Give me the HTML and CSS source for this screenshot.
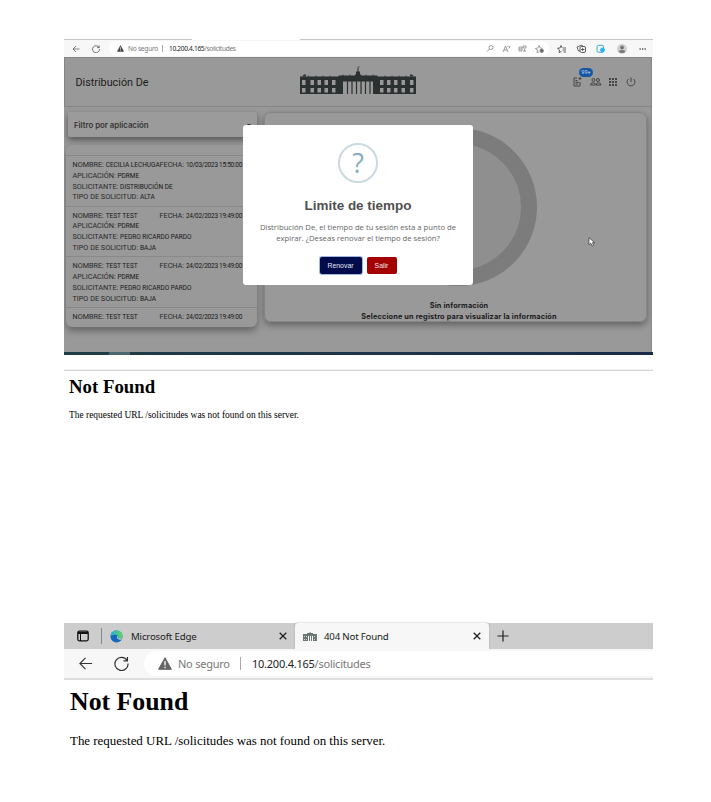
FILE: index.html
```html
<!DOCTYPE html>
<html lang="es">
<head>
<meta charset="utf-8">
<title>404 Not Found</title>
<link rel="stylesheet" href="styles.css">
</head>
<body>
<svg class="defs" width="0" height="0">
  <symbol id="back" viewBox="0 0 16 16"><path d="M15 8H2M8 2L2 8l6 6" fill="none" stroke="currentColor" stroke-width="1.2"/></symbol>
  <symbol id="reload" viewBox="0 0 16 16"><path d="M14 4.800A7 7 0 1 0 15 8M14.300 1v4.200h-4.200" fill="none" stroke="currentColor" stroke-width="1.3"/></symbol>
  <symbol id="warn" viewBox="0 0 14 13"><path d="M7 .7L13.400 12.300H.6z" fill="currentColor" stroke="currentColor" stroke-linejoin="round"/><path d="M7 4v4.500M7 9.800v1.400" stroke="#fff" stroke-width="1.3"/></symbol>
  <symbol id="close" viewBox="0 0 8 8"><path d="M.7.7l6.600 6.600M7.300.7L.7 7.300" stroke="currentColor" stroke-width="1.3"/></symbol>
  <symbol id="palace" viewBox="0 0 116 28">
    <path fill="currentColor" fill-rule="evenodd" d="M0 10.500h38.500V9.500h16l1.500-1.500V5.500h1.500V2h1v3.500H60V8l1.500 1.500h16v1H116V28H73V15.500H43V28H0zM2 14v5h3.500v-5zM10.500 14v5h3.500v-5zM17.500 14v5h3.500v-5zM24.500 14v5h3.500v-5zM32 14v5h3.500v-5zM2 22v4.500h3.500V22zM10.500 22v4.500h3.500V22zM17.500 22v4.500h3.500V22zM24.500 22v4.500h3.500V22zM32 22v4.500h3.500V22zM80 14v5h3.500v-5zM87 14v5h3.500v-5zM94 14v5h3.500v-5zM101.500 14v5h3.500v-5zM110 14v5h3.500v-5zM80 22v4.500h3.500V22zM87 22v4.500h3.500V22zM94 22v4.500h3.500V22zM101.500 22v4.500h3.500V22zM110 22v4.500h3.500V22z"/>
    <path stroke="currentColor" stroke-width="1.2" d="M47.500 15v13M52 15v13M56.500 15v13M61 15v13M65.500 15v13M70 15v13"/>
    <path stroke="currentColor" stroke-width=".8" d="M8.500 9.500V11M16 9.500V11M23 9.500V11M30 9.500V11M85 9.500V11M92 9.500V11M99 9.500V11M106 9.500V11M43 8.500V10M50 8.500V10M66 8.500V10M73 8.500V10M57.500 1h2"/>
    <path fill="currentColor" d="M2 10.500l2-2h2v2zM114 10.500l-2-2h-2v2z"/>
  </symbol>
</svg>
<main class="doc">
  <section class="session">
    <div class="tabline"><i></i><i></i></div>
    <div class="bar small">
      <svg class="s-back"><use href="#back"/></svg>
      <svg class="s-reload"><use href="#reload"/></svg>
      <div class="address">
        <svg class="s-warn"><use href="#warn"/></svg>
        <span class="insecure">No seguro</span><span class="sep"></span>
        <span class="url"><b>10.200.4.165</b>/solicitudes</span>
        <svg class="tools" width="60" height="12" viewBox="0 0 60 12" fill="none" stroke="#858585" stroke-width=".8">
          <circle cx="5" cy="4.500" r="2"/><path d="M3.500 6L1 8.700"/>
          <path d="M17 9l2.500-6L22 9M18 7h3.200M23 2.500q1.500 1 0 3M21.500 3l.8 1"/>
          <path d="M33 4h3v4h-3zM33 6h3M37 3h3v2h-3zM38.500 6v2M37 8h3"/>
          <path d="M53 9l-2 .5.4-2.500-2-1.500 2.400-.5L53 2.500l1.200 2.500 2.500.3"/><circle cx="55.700" cy="7.800" r="1.800" fill="#666"/>
        </svg>
      </div>
      <svg class="actions" width="92" height="12" viewBox="0 0 92 12" fill="none" stroke="#505050" stroke-width=".9">
        <path d="M6.500 8.500L4 9.500l.5-2.500-2-1.700 2.600-.4L6 2.500l1.200 2.400M8 5h3M7.500 7H11M8.500 9H11"/>
        <path d="M25 8h-1.500L22 4l5-2 1 2"/><rect x="25" y="3.500" width="5.500" height="6" rx="1.500"/><path d="M27.700 4.800v3.400M26 6.500h3.500"/>
        <rect x="42" y="2.300" width="6.500" height="7" rx="1.500" stroke="#2b9fd4"/><circle cx="47.500" cy="7" r="2" fill="#26b5ee" stroke="#26b5ee"/>
        <circle cx="67" cy="6" r="5" fill="#d2cfcc" stroke="none"/><circle cx="67" cy="4.500" r="1.900" fill="#777" stroke="none"/><path d="M63.800 9q0-2 3.200-2t3.200 2q-3 2-6.400 0z" fill="#777" stroke="none"/>
        <path d="M84.500 6h1.300M87 6h1.300M89.500 6h1.300" stroke-width="1.300"/>
      </svg>
    </div>
    <div class="app">
      <header class="apphead">
        <div class="user">Distribución De</div>
        <svg class="logo"><use href="#palace"/></svg>
        <div class="menu">
          <svg width="64" height="12" viewBox="0 0 64 12" fill="none" stroke="#444" stroke-width="1">
            <path d="M5 2H2v8h6V6M3.500 4.500h2M3.500 6.300H7M3.500 8H6M8 1v3M6.500 2.500h3"/>
            <circle cx="21.500" cy="4" r="1.500"/><circle cx="26" cy="4" r="1.500"/><path d="M18.500 9q0-2.200 2.500-2.200T23.500 9zM24 9q0-2.200 2.500-2.200T29 9z"/>
            <path d="M37 3h2M40 3h2M43 3h2M37 6h2M40 6h2M43 6h2M37 9h2M40 9h2M43 9h2" stroke-width="2"/>
            <path d="M59 1.500V6M56.500 3a3.900 3.900 0 1 0 5 0"/>
          </svg>
          <span class="badge">99+</span>
        </div>
      </header>
      <div class="content">
        <aside>
          <div class="filter"><span>Filtro por aplicación</span><i class="caret"></i></div>
          <div class="list">
            <article><div class="first"><p>NOMBRE: <em>CECILIA LECHUGA</em></p><p>FECHA: <em class="date">10/03/2023 15:50:00</em></p></div><p>APLICACIÓN: <em>PDRME</em></p><p>SOLICITANTE: <em>DISTRIBUCIÓN DE</em></p><p>TIPO DE SOLICITUD: <em>ALTA</em></p></article>
            <article><div class="first"><p>NOMBRE: <em>TEST TEST</em></p><p>FECHA: <em class="date">24/02/2023 19:49:00</em></p></div><p>APLICACIÓN: <em>PDRME</em></p><p>SOLICITANTE: <em>PEDRO RICARDO PARDO</em></p><p>TIPO DE SOLICITUD: <em>BAJA</em></p></article>
            <article><div class="first"><p>NOMBRE: <em>TEST TEST</em></p><p>FECHA: <em class="date">24/02/2023 19:49:00</em></p></div><p>APLICACIÓN: <em>PDRME</em></p><p>SOLICITANTE: <em>PEDRO RICARDO PARDO</em></p><p>TIPO DE SOLICITUD: <em>BAJA</em></p></article>
            <article><div class="first"><p>NOMBRE: <em>TEST TEST</em></p><p>FECHA: <em class="date">24/02/2023 19:49:00</em></p></div></article>
          </div>
        </aside>
        <section class="detail">
          <div class="ring"></div>
          <p>Sin información</p>
          <p>Seleccione un registro para visualizar la información</p>
        </section>
      </div>
      <svg class="pointer" viewBox="0 0 8 10"><path d="M1 .7v7l1.800-1.500 1.300 2.800 1.500-.7-1.200-2.600h2.300z" fill="#fff" stroke="#333" stroke-width=".7"/></svg>
      <div class="modal">
        <div class="question">?</div>
        <h2>Limite de tiempo</h2>
        <p class="m1">Distribución De, el tiempo de tu sesión esta a punto de</p>
        <p class="m2">expirar. ¿Deseas renovar el tiempo de sesión?</p>
        <div class="buttons"><button class="renew">Renovar</button><button class="exit">Salir</button></div>
      </div>
    </div>
    <div class="taskbar"><i></i></div>
  </section>

  <section class="notfound">
    <h1>Not Found</h1>
    <p>The requested URL /solicitudes was not found on this server.</p>
  </section>

  <section class="browser">
    <div class="tabs">
      <svg class="workspace" viewBox="0 0 12 12" fill="none" stroke="#111" stroke-width="1.300"><rect x=".8" y="1.200" width="10.400" height="9.600" rx="1.500"/><path d="M1 3h10" stroke-width="2"/><path d="M3.500 3v8" stroke-width="1"/></svg>
      <span class="divider"></span>
      <div class="tab">
        <svg class="edge" viewBox="0 0 14 14"><defs><linearGradient id="g" x1="0" x2="1"><stop offset="0" stop-color="#27a9df"/><stop offset="1" stop-color="#62d65a"/></linearGradient></defs><circle cx="7" cy="7" r="6.500" fill="#1469bd"/><path d="M.5 7A6.500 6.500 0 0 1 13.500 6.500C13.500 9 11 9.800 8.500 9.300 9.500 7 8.500 5 5.500 5 3 5 1 6 .5 7z" fill="url(#g)"/><path d="M8.300 6.500C6.800 7.500 7.300 10.800 12.300 10.600L13.500 8.500C11.500 9.500 9 9.300 8.500 8.500 9 7.800 8.800 7 8.300 6.500z" fill="#cdcdcd"/></svg>
        <span class="label edge-label">Microsoft Edge</span><svg class="x"><use href="#close"/></svg>
      </div>
      <div class="tab active">
        <svg class="favicon" viewBox="0 0 14 9"><path d="M0 2h4V1h2l1-1 1 1h2v1h4v7h-4V4H9v5H8V4H7v5H6V4H5v5H0z" fill="#6d7775"/><path d="M1 4h1v1H1zM3 4h1v1H3zM1 7h1v1H1zM3 7h1v1H3zM11 4h1v1h-1zM11 7h1v1h-1z" fill="#ccc"/></svg>
        <span class="label nf-label">404 Not Found</span><svg class="x"><use href="#close"/></svg>
      </div>
      <svg class="plus" viewBox="0 0 12 12"><path d="M6 .5v11M.5 6h11" stroke="#222" stroke-width="1.200"/></svg>
    </div>
    <div class="bar large">
      <svg class="l-back"><use href="#back"/></svg>
      <svg class="l-reload"><use href="#reload"/></svg>
      <div class="address">
        <svg class="l-warn"><use href="#warn"/></svg>
        <span class="insecure">No seguro</span><span class="sep"></span>
        <span class="url"><b>10.200.4.165</b>/solicitudes</span>
      </div>
    </div>
    <div class="page">
      <h1>Not Found</h1>
      <p>The requested URL /solicitudes was not found on this server.</p>
    </div>
  </section>
</main>
</body>
</html>
```
FILE: styles.css
```css
* { box-sizing: border-box; }
body { margin: 0; background: #fff; height: 802px; overflow: hidden; }
h1, h2, p { margin: 0; white-space: nowrap; }
svg { display: block; flex: none; }
.defs { position: absolute; }
.doc { width: 589px; margin-left: 64px; padding-top: 39px; }

.session { height: 316px; }
.tabline { height: 1px; display: flex; justify-content: space-between; }
.tabline i { background: #c6c6c6; width: 128px; }
.tabline i + i { width: 353px; }
.bar { display: flex; align-items: center; background: #f7f7f7; color: #333; font-family: "Noto Sans", sans-serif; white-space: nowrap; }
.address { display: flex; align-items: center; background: #fff; color: #777; }
.address b { font-weight: 400; color: #222; }
.address svg { color: #666; }
.sep { width: 1px; background: #aaa; }
.small { height: 17px; font-size: 6.6px; }
.s-back { width: 8px; height: 8px; margin-left: 8px; }
.s-reload { width: 8px; height: 8px; margin-left: 12px; }
.small .address { width: 440px; height: 15px; margin-left: 9px; border-radius: 8px; padding-left: 8px; }
.small .s-warn { width: 7px; height: 7px; color: #444; }
.small .insecure { width: 30px; margin-left: 4px; letter-spacing: -.25px; }
.small .sep { height: 7px; margin-left: 4px; }
.small .url { margin-left: 6px; width: 67px; letter-spacing: -.33px; }
.small .tools { margin-left: 250px; }
.actions { margin-left: 6px; }

.app { position: relative; width: 588px; height: 295px; background: #999; overflow: hidden; border-right: 1px solid #888; }
.apphead { height: 50px; display: flex; align-items: center; border: 1px solid #858585; border-width: 1px 0 1px 1px; }
.user { width: 225px; padding: 0 0 0 10.500px; font: 10.8px Roboto, sans-serif; color: #1c1c1c; white-space: nowrap; }
.logo { width: 116px; height: 28px; margin: -4px 0 0 10px; color: #2b3130; }
.menu { position: relative; margin-left: 156px; margin-top: -1px; }
.badge { position: absolute; left: 7px; top: -8px; width: 14px; height: 9px; border-radius: 5px; background: #1458a5; color: #c8d6e8; font: 5.5px/9px Roboto, sans-serif; text-align: center; }
.content { display: flex; gap: 7px; padding: 5px 0 0 2px; }
aside { width: 191px; flex: none; }
.filter { height: 25px; margin: 0 0 0 2px; padding: 0 6px; display: flex; align-items: center; justify-content: space-between; border-radius: 2px; background: #9b9b9b; box-shadow: 0 3px 6px #555; font: 600 7.8px Inter, sans-serif; color: #353535; white-space: nowrap; }
.caret { border: 2px solid transparent; border-top-color: #333; border-bottom: 0; }
.list { height: 182px; margin-top: 8px; padding-top: 10px; border-radius: 6px; background: #999; box-shadow: 0 4px 7px #666; font: 7.25px/10.8px Roboto, sans-serif; color: #292929; }
.list article { height: 50.700px; padding: 4px 0 0 6.500px; border-top: 1px solid #898989; }
.list article:last-child { height: 19px; }
.list em { font-style: normal; font-size: 6.500px; font-weight: 400; color: #181818; }
.first { display: grid; grid-template-columns: 87px 1fr; }
.list .date { letter-spacing: -.27px; }
.detail { flex: none; width: 383px; height: 210px; padding-top: 15px; border: 1px solid #858585; border-radius: 7px; box-shadow: 0 3px 7px #606060; font: 700 7.3px/11px Inter, sans-serif; letter-spacing: .17px; color: #1b1b1b; text-align: center; }
.ring { width: 158px; height: 158px; margin: 0 auto 14px 114px; border: 16px solid #7c7c7c; border-radius: 50%; background: #8f8f8f; }
.detail p { padding-left: 7px; }
.pointer { position: absolute; left: 524px; top: 180px; width: 8px; height: 10px; }
.modal { position: absolute; left: 179px; top: 68px; width: 230px; height: 160px; padding-top: 18px; background: #fff; border-radius: 3px; display: flex; flex-direction: column; align-items: center; text-align: center; font-family: "Open Sans", sans-serif; color: #666; }
.question { width: 40px; height: 40px; border: 2px solid #c9dae1; border-radius: 50%; font: 27px/36px "Open Sans", sans-serif; color: #87adbd; }
.modal h2 { margin-top: 15px; font: 700 13.450px/16px "Liberation Sans", sans-serif; color: #505050; }
.modal p { font-size: 7.700px; line-height: 11px; }
.modal .m1 { margin-top: 8px; }
.buttons { display: flex; gap: 5px; margin-top: 13px; }
button { height: 17px; border: 0; padding: 0; border-radius: 2px; color: #e8e8f0; font: 6.900px/17px "Liberation Sans", sans-serif; }
.renew { width: 42px; background: #000b4b; box-shadow: 0 0 0 1px #9eb9dc; }
.exit { width: 30px; background: #a50000; }
.taskbar { height: 3px; background: linear-gradient(90deg, #203d46, #1a2b49); padding-left: 45px; }
.taskbar i { display: block; width: 21px; height: 3px; background: #4b6671; }

.notfound { height: 253px; margin-top: 14px; padding: 6px 0 0 5px; border-top: 1px solid #f1f1f1; box-shadow: inset 0 1px #d6d6d6; font-family: "Liberation Serif", serif; color: #000; }
.notfound h1 { font-size: 18.800px; line-height: 22px; }
.notfound p { margin-top: 11px; font-size: 9.430px; line-height: 12px; }

.browser { margin-top: 1px; }
.tabs { height: 26px; display: flex; align-items: center; background: #cdcdcd; font: 9.7px "Noto Sans", sans-serif; letter-spacing: -.2px; color: #222; }
.workspace { width: 12px; height: 12px; margin-left: 13px; }
.divider { width: 1px; height: 16px; margin-left: 12px; background: #888; }
.tab { display: flex; align-items: center; width: 193px; height: 26px; padding: 0 8px; }
.tab.active { width: 194px; background: #f7f7f7; border-radius: 3px 3px 0 0; box-shadow: 0 0 2px #aaa; }
.edge { width: 13px; height: 13px; }
.label { margin-left: 8px; white-space: nowrap; }
.favicon { width: 14px; height: 9px; }
.nf-label { margin-left: 7px; }
.x { width: 8px; height: 8px; margin-left: auto; }
.plus { width: 12px; height: 12px; margin-left: 8px; }
.large { position: relative; height: 31px; border-bottom: 2px solid #dedede; font-size: 11px; letter-spacing: -.24px; }
.l-back { width: 15px; height: 15px; margin-left: 14px; }
.l-reload { width: 15px; height: 15px; margin-left: 21px; }
.large .address { flex: 1; height: 25px; margin-left: 15px; padding-left: 14px; border-radius: 13px 0 0 13px; }
.l-warn { width: 14px; height: 13px; }
.large .insecure { width: 53px; margin-left: 6px; }
.large .sep { height: 13px; margin-left: 9px; }
.large .url { margin-left: 11px; }
.page { padding: 7px 0 0 6px; font-family: "Liberation Serif", serif; color: #000; }
.page h1 { font-size: 25.800px; line-height: 30px; }
.page p { margin-top: 16px; font-size: 12.930px; line-height: 16px; }
```
